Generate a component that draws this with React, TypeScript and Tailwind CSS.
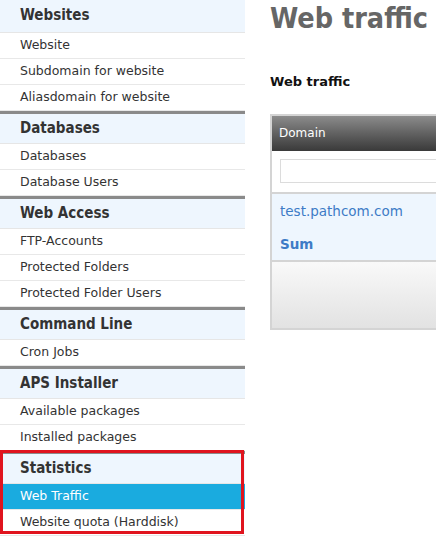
const sections = [
  { title: "Websites", items: ["Website", "Subdomain for website", "Aliasdomain for website"] },
  { title: "Databases", items: ["Databases", "Database Users"] },
  { title: "Web Access", items: ["FTP-Accounts", "Protected Folders", "Protected Folder Users"] },
  { title: "Command Line", items: ["Cron Jobs"] },
  { title: "APS Installer", items: ["Available packages", "Installed packages"] },
  { title: "Statistics", items: ["Web Traffic", "Website quota (Harddisk)"] },
];

const font = { fontFamily: '"DejaVu Sans", Verdana, sans-serif' };
const narrow = { fontFamily: '"DejaVu Sans Condensed", "DejaVu Sans", sans-serif', fontStretch: "condensed" };

export default function App() {
  return (
    <div className="flex h-[536px] w-[436px] overflow-hidden bg-white text-[#333]" style={font}>
      {/* Sidebar */}
      <div className="relative w-[245px] shrink-0">
        {sections.map((s, i) => (
          <div key={s.title} className={i > 0 ? "border-t-[3px] border-[#8a8a8a]" : ""}>
            <div
              className={`flex items-center border-b border-[#e6e6e6] bg-[#eef6fe] pl-5 text-[15px] font-bold text-[#333] ${
                i === 0 ? "h-[33px] pb-[2px]" : "h-[30px]"
              }`}
              style={narrow}
            >
              {s.title}
            </div>
            {s.items.map((item) => {
              const active = item === "Web Traffic";
              return (
                <div
                  key={item}
                  className={`flex h-[26px] items-center border-b border-[#e8e8e8] pl-5 text-[12.5px] ${
                    active ? "bg-[#1aabdf] text-white" : "text-[#333]"
                  }`}
                >
                  {item}
                </div>
              );
            })}
          </div>
        ))}
        {/* highlight box */}
        <div className="absolute left-0 top-[450px] h-[84px] w-[244px] border-[3px] border-[#e0141e]" />
      </div>

      {/* Main */}
      <div className="min-w-0 flex-1 pl-[25px]">
        <h1 className="mt-[2px] whitespace-nowrap text-[28.5px] font-bold leading-[34px] text-[#666]" style={narrow}>
          Web traffic
        </h1>
        <h2 className="mt-[36px] text-[13px] font-bold text-[#111]">Web traffic</h2>
        <div className="mt-[22px] w-[300px] border-2 border-[#d4d4d4]">
          <div className="flex h-[35px] items-center bg-gradient-to-b from-[#8c8c8c] to-[#3a3a3a] pl-[7px] text-[12px] text-white">
            Domain
          </div>
          <div className="h-[43px] border-b-2 border-[#d4d4d4] bg-white pl-[8px] pt-[8px]">
            <div className="h-[24px] w-full border border-[#dcdcdc] bg-white" />
          </div>
          <div className="border-b-2 border-[#d4d4d4] bg-[#eef6fe] pb-[7px] pl-[8px] pt-[8px]">
            <div className="text-[13.5px] leading-[18px] text-[#3d7bc6]">test.pathcom.com</div>
            <div className="mt-[15px] text-[13.5px] font-bold leading-[18px] text-[#3d7bc6]">Sum</div>
          </div>
          <div className="h-[66px] bg-gradient-to-b from-[#f9f9f9] to-[#e2e2e2]" />
        </div>
      </div>
    </div>
  );
}
